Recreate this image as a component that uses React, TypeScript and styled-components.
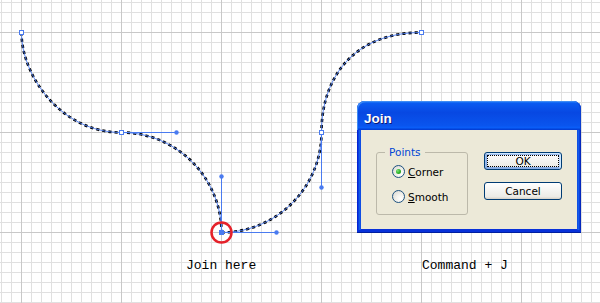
import React from "react";
import styled, { createGlobalStyle } from "styled-components";

const Global = createGlobalStyle`
  html, body { margin: 0; padding: 0; background: #fff; }
  #root { width: 600px; height: 303px; }
`;

const Canvas = styled.div`
  position: relative;
  width: 600px;
  height: 303px;
  overflow: hidden;
  background-color: #fff;
  background-image:
    linear-gradient(to right, #c8c8c8 1px, transparent 1px),
    linear-gradient(to bottom, #c8c8c8 1px, transparent 1px),
    linear-gradient(to right, #e0e0e0 1px, transparent 1px),
    linear-gradient(to bottom, #e0e0e0 1px, transparent 1px);
  background-size: 100px 100px, 100px 100px, 10px 10px, 10px 10px;
  background-position: 21px 0, 0 32px, 1px 0, 0 2px;
`;

const Drawing = styled.svg`
  position: absolute;
  left: 0;
  top: 0;
`;

const Caption = styled.span<{ $x: number; $y: number }>`
  position: absolute;
  left: ${(p) => p.$x}px;
  top: ${(p) => p.$y}px;
  font-family: "Liberation Mono", "Courier New", monospace;
  font-size: 13px;
  line-height: 15px;
  color: #000;
  white-space: pre;
`;

const Window = styled.div`
  position: absolute;
  left: 357px;
  top: 101px;
  width: 224px;
  height: 132px;
  box-sizing: border-box;
  display: flex;
  flex-direction: column;
  padding: 0 4px 4px;
  border-radius: 8px 8px 0 0;
  background: linear-gradient(to right, #0019cf 0, #0831d9 1px, #166aee 3px, #0831d9 4px, #0831d9 calc(100% - 4px), #166aee calc(100% - 3px), #0831d9 calc(100% - 1px), #001ea0 100%);
  box-shadow: inset 0 -1px #001ea0, inset 0 -3px #0831d9;
`;

const TitleBar = styled.div`
  margin: 0 -4px;
  height: 29px;
  box-sizing: border-box;
  padding: 8px 0 0 7px;
  border-radius: 8px 8px 0 0;
  background: linear-gradient(180deg, #2a8cff 0%, #0a5af0 8%, #0848e2 40%, #0a55ee 85%, #0a5ef8 92%, #0449e0 96%, #0338d0 100%);
  box-shadow: inset 1px 1px #3f8cf3, inset -1px 0 #0b3ecf;
`;

const Title = styled.span`
  font-family: "Liberation Sans", Arial, sans-serif;
  font-weight: bold;
  font-size: 13.5px;
  line-height: 15px;
  color: #fff;
  text-shadow: 1px 1px #0a1877;
`;

const Client = styled.div`
  flex: 1;
  background: #ece9d8;
  display: flex;
  align-items: flex-start;
  padding: 16px 15px 0;
  font-family: "DejaVu Sans", Tahoma, sans-serif;
  font-size: 10.5px;
  color: #000;
`;

const GroupBox = styled.fieldset`
  margin: 0;
  width: 92px;
  height: 69px;
  box-sizing: border-box;
  padding: 0 0 0 8px;
  border: 1px solid #bcb9aa;
  border-radius: 3px;
  min-inline-size: 0;
`;

const Legend = styled.legend`
  padding: 0 4px;
  color: #0046d5;
  line-height: 13px;
`;

const RadioList = styled.div`
  display: flex;
  flex-direction: column;
  margin-left: 7px;
`;

const RadioRow = styled.label`
  display: flex;
  align-items: center;
  height: 25px;
  gap: 3px;
`;

const RadioCircle = styled.span<{ $checked?: boolean }>`
  width: 13px;
  height: 13px;
  box-sizing: border-box;
  border-radius: 50%;
  border: 1px solid #1c5180;
  display: flex;
  align-items: center;
  justify-content: center;
  background: radial-gradient(circle at 70% 70%, #fff 0%, #f2f1ec 40%, #d6d5cf 100%);
  &::after {
    content: "";
    display: ${(p) => (p.$checked ? "block" : "none")};
    width: 5px;
    height: 5px;
    border-radius: 50%;
    background: radial-gradient(circle at 35% 35%, #7ee27a 0%, #2fb52b 50%, #1f8c1c 100%);
  }
`;

const Key = styled.span`
  text-decoration: underline;
`;

const ButtonColumn = styled.div`
  display: flex;
  flex-direction: column;
  gap: 12px;
  margin: 6px 0 0 16px;
`;

const Button = styled.button<{ $default?: boolean }>`
  width: 78px;
  height: 18px;
  box-sizing: border-box;
  padding: 0;
  margin: 0;
  border: 1px solid #003c74;
  border-radius: 3px;
  font-family: "DejaVu Sans", Tahoma, sans-serif;
  font-size: 10.5px;
  line-height: 14px;
  color: #000;
  background: linear-gradient(180deg, #fff, #ecebe6 86%, #d6d0c5);
  ${(p) =>
    p.$default
      ? `box-shadow: inset -1px 1px #cee7ff, inset 1px 2px #98b8ea, inset -2px 2px #bcd4f6, inset 1px -1px #89ade4, inset 2px -2px #89ade4;
         outline: 1px dotted #000; outline-offset: -4px;`
      : ""}
`;

const BLUE = "#4a7bf0";

const anchors: [number, number][] = [
  [21, 32],
  [121, 132],
  [321, 132],
  [421, 32],
];
const handles: [number, number][] = [
  [176, 132],
  [221, 176],
  [276, 232],
  [321, 187],
];
const curves = [
  "M21 32 C21 75 60 132 121 132 C176 132 221 177 221 232",
  "M221 232 C276 232 321 187 321 132 C321 75 355 32 421 32",
];

export default function App() {
  return (
    <>
      <Global />
      <Canvas>
        <Drawing width={600} height={303} viewBox="0 0 600 303">
          <g transform="translate(0.5 0.5)">
            {curves.map((d) => (
              <path key={d + "k"} d={d} fill="none" stroke="#000" strokeWidth={2.6} strokeDasharray="3.2 3" />
            ))}
            {curves.map((d) => (
              <path key={d + "b"} d={d} fill="none" stroke={BLUE} strokeWidth={0.9} />
            ))}
            <path d="M121 132 H176 M221 232 V176 M221 232 H276 M321 132 V187" stroke={BLUE} strokeWidth={1} fill="none" />
            {handles.map(([x, y]) => (
              <circle key={`h${x}-${y}`} cx={x} cy={y} r={2.2} fill={BLUE} />
            ))}
            {anchors.map(([x, y]) => (
              <rect key={`a${x}-${y}`} x={x - 2} y={y - 2} width={4} height={4} fill="#fff" stroke={BLUE} strokeWidth={1} />
            ))}
            <rect x={218.5} y={229.5} width={5} height={5} fill={BLUE} />
            <circle cx={221} cy={232} r={10} fill="none" stroke="#e5222b" strokeWidth={2.5} />
          </g>
        </Drawing>
        <Caption $x={186} $y={258}>Join here</Caption>
        <Caption $x={422} $y={258}>Command + J</Caption>
        <Window>
          <TitleBar>
            <Title>Join</Title>
          </TitleBar>
          <Client>
            <GroupBox>
              <Legend>Points</Legend>
              <RadioList>
                <RadioRow>
                  <RadioCircle $checked />
                  <span>
                    <Key>C</Key>orner
                  </span>
                </RadioRow>
                <RadioRow>
                  <RadioCircle />
                  <span>
                    <Key>S</Key>mooth
                  </span>
                </RadioRow>
              </RadioList>
            </GroupBox>
            <ButtonColumn>
              <Button $default>OK</Button>
              <Button>Cancel</Button>
            </ButtonColumn>
          </Client>
        </Window>
      </Canvas>
    </>
  );
}
